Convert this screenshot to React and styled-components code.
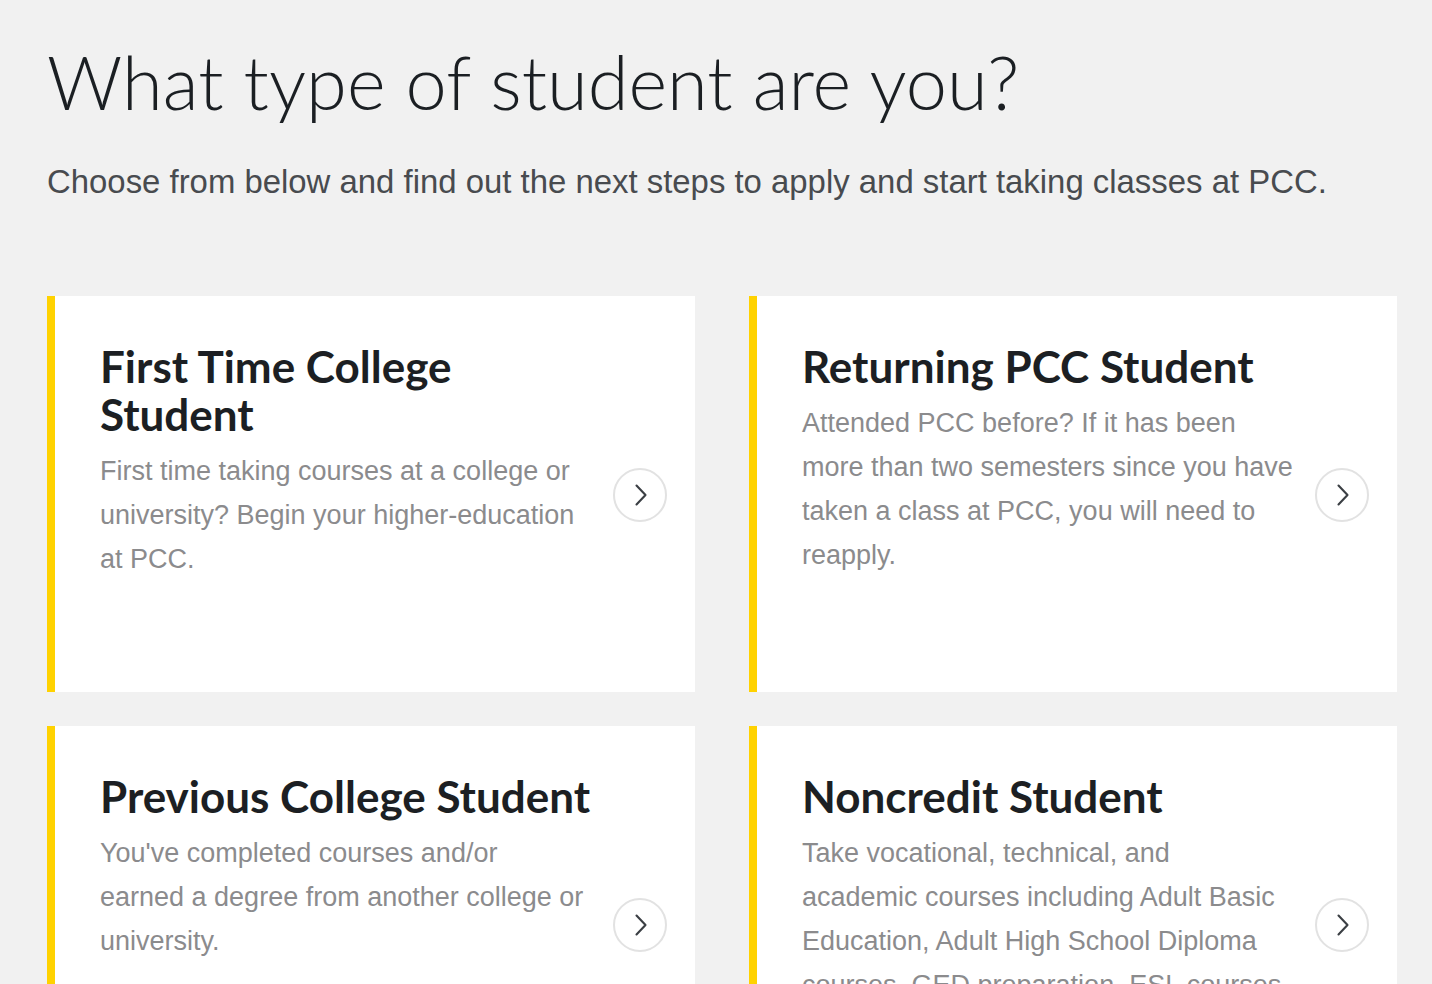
import React from "react";
import styled, { createGlobalStyle } from "styled-components";

const Global = createGlobalStyle`
  html, body { margin: 0; padding: 0; background: #f1f1f1; }
  body { font-family: "Liberation Sans", Arial, sans-serif; overflow: hidden; }
  * { box-sizing: border-box; }
`;

const Page = styled.main`
  padding: 37px 35px 0 47px;
`;

const Heading = styled.h1`
  margin: 0;
  font-family: "Lato", "Liberation Sans", sans-serif;
  font-weight: 300;
  font-size: 74px;
  line-height: 90px;
  color: #1b1f23;
`;

const Intro = styled.p`
  margin: 35px 0 0;
  font-family: "Liberation Sans", Arial, sans-serif;
  font-size: 32.9px;
  line-height: 40px;
  color: #484b4f;
`;

const Grid = styled.div`
  margin-top: 94px;
  display: grid;
  grid-template-columns: 648px 648px;
  column-gap: 54px;
  row-gap: 34px;
`;

const Card = styled.a`
  display: flex;
  align-items: center;
  height: 396px;
  background: #fff;
  border-left: 8px solid #ffd200;
  padding: 0 28px 0 45px;
  text-decoration: none;
  overflow: hidden;
`;

const Body = styled.div`
  align-self: flex-start;
  width: 500px;
  flex: none;
  padding-top: 46px;
`;

const Title = styled.h2`
  margin: 0;
  font-family: "Lato", "Liberation Sans", sans-serif;
  font-weight: 700;
  font-size: 44px;
  line-height: 48px;
  color: #1c1f23;
`;

const Desc = styled.p`
  margin: 11px 0 0;
  font-family: "Liberation Sans", Arial, sans-serif;
  font-size: 27px;
  line-height: 44px;
  color: #8b8b8d;
`;

const Line = styled.span`
  display: block;
  white-space: nowrap;
`;

const Circle = styled.span`
  margin-left: auto;
  margin-top: 2px;
  flex: none;
  width: 54px;
  height: 54px;
  border-radius: 50%;
  border: 2px solid #e2e2e2;
  display: flex;
  align-items: center;
  justify-content: center;
  color: #3b3f44;
`;

const Chevron = () => (
  <svg width="24" height="24" viewBox="0 0 24 24" fill="none" stroke="currentColor" strokeWidth="2.1" strokeLinecap="round" strokeLinejoin="round">
    <path d="M8.5 2.5l9 9.5-9 9.5" />
  </svg>
);

const cards = [
  {
    title: "First Time College Student",
    lines: [
      "First time taking courses at a college or",
      "university? Begin your higher-education",
      "at PCC.",
    ],
  },
  {
    title: "Returning PCC Student",
    lines: [
      "Attended PCC before? If it has been",
      "more than two semesters since you have",
      "taken a class at PCC, you will need to",
      "reapply.",
    ],
  },
  {
    title: "Previous College Student",
    lines: [
      "You've completed courses and/or",
      "earned a degree from another college or",
      "university.",
    ],
  },
  {
    title: "Noncredit Student",
    lines: [
      "Take vocational, technical, and",
      "academic courses including Adult Basic",
      "Education, Adult High School Diploma",
      "courses, GED preparation, ESL courses",
      "and more.",
    ],
  },
];

export default function App() {
  return (
    <>
      <Global />
      <Page>
        <Heading>What type of student are you?</Heading>
        <Intro>Choose from below and find out the next steps to apply and start taking classes at PCC.</Intro>
        <Grid>
          {cards.map((c) => (
            <Card key={c.title} href="#">
              <Body>
                <Title>{c.title}</Title>
                <Desc>
                  {c.lines.map((l) => (
                    <Line key={l}>{l}</Line>
                  ))}
                </Desc>
              </Body>
              <Circle>
                <Chevron />
              </Circle>
            </Card>
          ))}
        </Grid>
      </Page>
    </>
  );
}
